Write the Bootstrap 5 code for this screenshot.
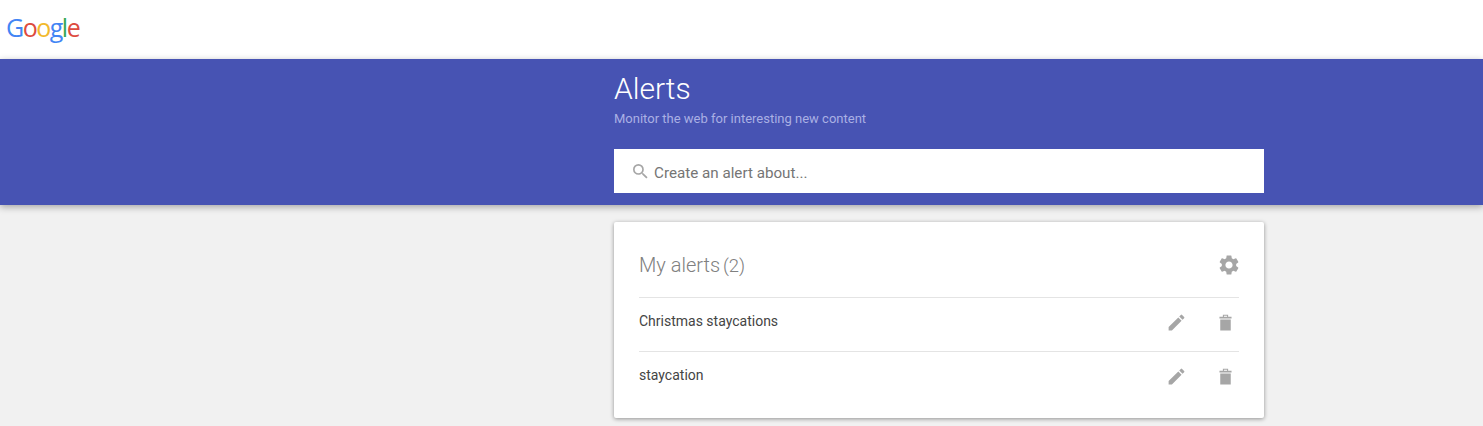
<!DOCTYPE html>
<html lang="en">
<head>
<meta charset="utf-8">
<title>Google Alerts</title>
<link href="https://cdn.jsdelivr.net/npm/bootstrap@5.3.0/dist/css/bootstrap.min.css" rel="stylesheet">
<style>
html, body { height: 100%; }
body { background: #f1f1f1; font-family: Roboto, "Liberation Sans", sans-serif; overflow: hidden; }
.top-strip { height: 59px; background: #fff; padding: 11px 0 0 6px; }
.logo-word { font-family: "Open Sans", "Liberation Sans", sans-serif; font-size: 25px; line-height: 32px; letter-spacing: -1.5px; font-weight: 500; }
.lg-b { color: #4285f4; } .lg-r { color: #dd4b3e; } .lg-y { color: #f2b92c; } .lg-g { color: #34a853; }
.hero-band { height: 146px; background: #4753b3; box-shadow: 0 2px 7px rgba(0,0,0,.32); position: relative; padding: 11px 0 0 614px; }
.page-col { width: 650px; }
.hero-title { color: #fff; font-weight: 300; font-size: 30px; line-height: 38px; margin: 0; }
.hero-sub { color: #aab0e4; font-size: 13px; line-height: 16px; margin: 3px 0 0; }
.search-box { height: 44px; margin-top: 22px; background: #fff; padding-left: 19px; gap: 6px; }
.search-box input { border: 0; outline: 0; flex: 1; padding: 5px 0 0; font-size: 15.2px; color: #757575; background: transparent; }
.search-box input::placeholder { color: #757575; opacity: 1; }
.main-wrap { padding: 17px 0 0 614px; }
.alerts-panel { height: 196px; background: #fff; box-shadow: 0 1px 4px rgba(0,0,0,.4); padding: 0 25px; border-radius: 2px; }
.alerts-head { height: 75px; padding-top: 11px; }
.alerts-title { font-weight: 300; font-size: 20px; color: #808080; margin: 0; line-height: 24px; }
.alert-count { font-size: 18.5px; margin-left: -2px; }
.alert-row { height: 54px; border-top: 1px solid #e4e4e4; font-size: 14px; color: #444; padding-bottom: 6px; }
.row-actions { gap: 28px; padding-top: 1px; padding-right: 3px; }
.head-gear { margin-right: -2px; }
.glyph { fill: #a6a6a6; display: block; }
</style>
</head>
<body>
<header class="top-strip"><span class="logo-word"><span class="lg-b">G</span><span class="lg-r">o</span><span class="lg-y">o</span><span class="lg-b">g</span><span class="lg-g">l</span><span class="lg-r">e</span></span></header>
<section class="hero-band">
  <div class="page-col">
    <h1 class="hero-title">Alerts</h1>
    <p class="hero-sub">Monitor the web for interesting new content</p>
    <div class="search-box d-flex align-items-center">
      <svg class="glyph" width="15" height="15" viewBox="3 3 18 18"><path d="M15.5 14h-.79l-.28-.27A6.47 6.47 0 0 0 16 9.5 6.5 6.5 0 1 0 9.5 16c1.61 0 3.09-.59 4.23-1.57l.27.28v.79l5 4.99L20.49 19l-4.99-5zm-6 0C7.01 14 5 11.99 5 9.500S7.01 5 9.5 5 14 7.01 14 9.500 11.99 14 9.5 14z"/></svg>
      <input type="text" placeholder="Create an alert about..." aria-label="Create an alert about">
    </div>
  </div>
</section>
<main class="main-wrap">
  <div class="page-col alerts-panel">
    <div class="alerts-head d-flex align-items-center justify-content-between">
      <h2 class="alerts-title">My alerts <span class="alert-count">(2)</span></h2>
      <svg class="glyph head-gear" width="24" height="24" viewBox="0 0 24 24"><path d="M19.14 12.94c.04-.3.06-.61.06-.94 0-.32-.02-.64-.07-.94l2.03-1.58a.49.49 0 0 0 .12-.61l-1.92-3.32a.488.488 0 0 0-.59-.22l-2.39.96c-.5-.38-1.03-.7-1.62-.94l-.36-2.54a.484.484 0 0 0-.48-.41h-3.84c-.24 0-.43.17-.47.41l-.36 2.54c-.59.24-1.13.57-1.62.94l-2.39-.96c-.22-.08-.47 0-.59.22L2.74 8.87c-.12.21-.08.47.12.61l2.03 1.58c-.05.3-.09.63-.09.94s.02.64.07.94l-2.03 1.58a.49.49 0 0 0-.12.61l1.92 3.32c.12.22.37.29.59.22l2.39-.96c.5.38 1.03.7 1.62.94l.36 2.54c.05.24.24.41.48.41h3.84c.24 0 .44-.17.47-.41l.36-2.54c.59-.24 1.13-.56 1.62-.94l2.39.96c.22.08.47 0 .59-.22l1.92-3.32c.12-.22.07-.47-.12-.61l-2.01-1.58zM12 15.6c-1.98 0-3.6-1.62-3.6-3.6s1.62-3.6 3.6-3.6 3.6 1.62 3.6 3.6-1.62 3.6-3.6 3.6z"/></svg>
    </div>
    <div class="alert-row d-flex align-items-center justify-content-between">
      <span>Christmas staycations</span>
      <div class="row-actions d-flex">
        <svg class="glyph" width="21" height="21" viewBox="0 0 24 24"><path d="M3 17.25V21h3.75L17.81 9.94l-3.75-3.75L3 17.25zM20.71 7.04a1 1 0 0 0 0-1.41l-2.34-2.34a1 1 0 0 0-1.41 0l-1.83 1.83 3.75 3.75 1.83-1.83z"/></svg>
        <svg class="glyph" width="21" height="21" viewBox="0 0 24 24"><path fill-rule="evenodd" d="M6 8.500h12V21H6zM5.100 5.300H9V3h6v2.300h3.900v2.100H5.100zM10.200 4.200v1.100h3.600V4.200z"/></svg>
      </div>
    </div>
    <div class="alert-row d-flex align-items-center justify-content-between">
      <span>staycation</span>
      <div class="row-actions d-flex">
        <svg class="glyph" width="21" height="21" viewBox="0 0 24 24"><path d="M3 17.25V21h3.75L17.81 9.94l-3.75-3.75L3 17.25zM20.71 7.04a1 1 0 0 0 0-1.41l-2.34-2.34a1 1 0 0 0-1.41 0l-1.83 1.83 3.75 3.75 1.83-1.83z"/></svg>
        <svg class="glyph" width="21" height="21" viewBox="0 0 24 24"><path fill-rule="evenodd" d="M6 8.500h12V21H6zM5.100 5.300H9V3h6v2.300h3.900v2.100H5.100zM10.200 4.200v1.100h3.600V4.200z"/></svg>
      </div>
    </div>
  </div>
</main>
<script src="https://cdn.jsdelivr.net/npm/bootstrap@5.3.0/dist/js/bootstrap.bundle.min.js"></script>
</body>
</html>
